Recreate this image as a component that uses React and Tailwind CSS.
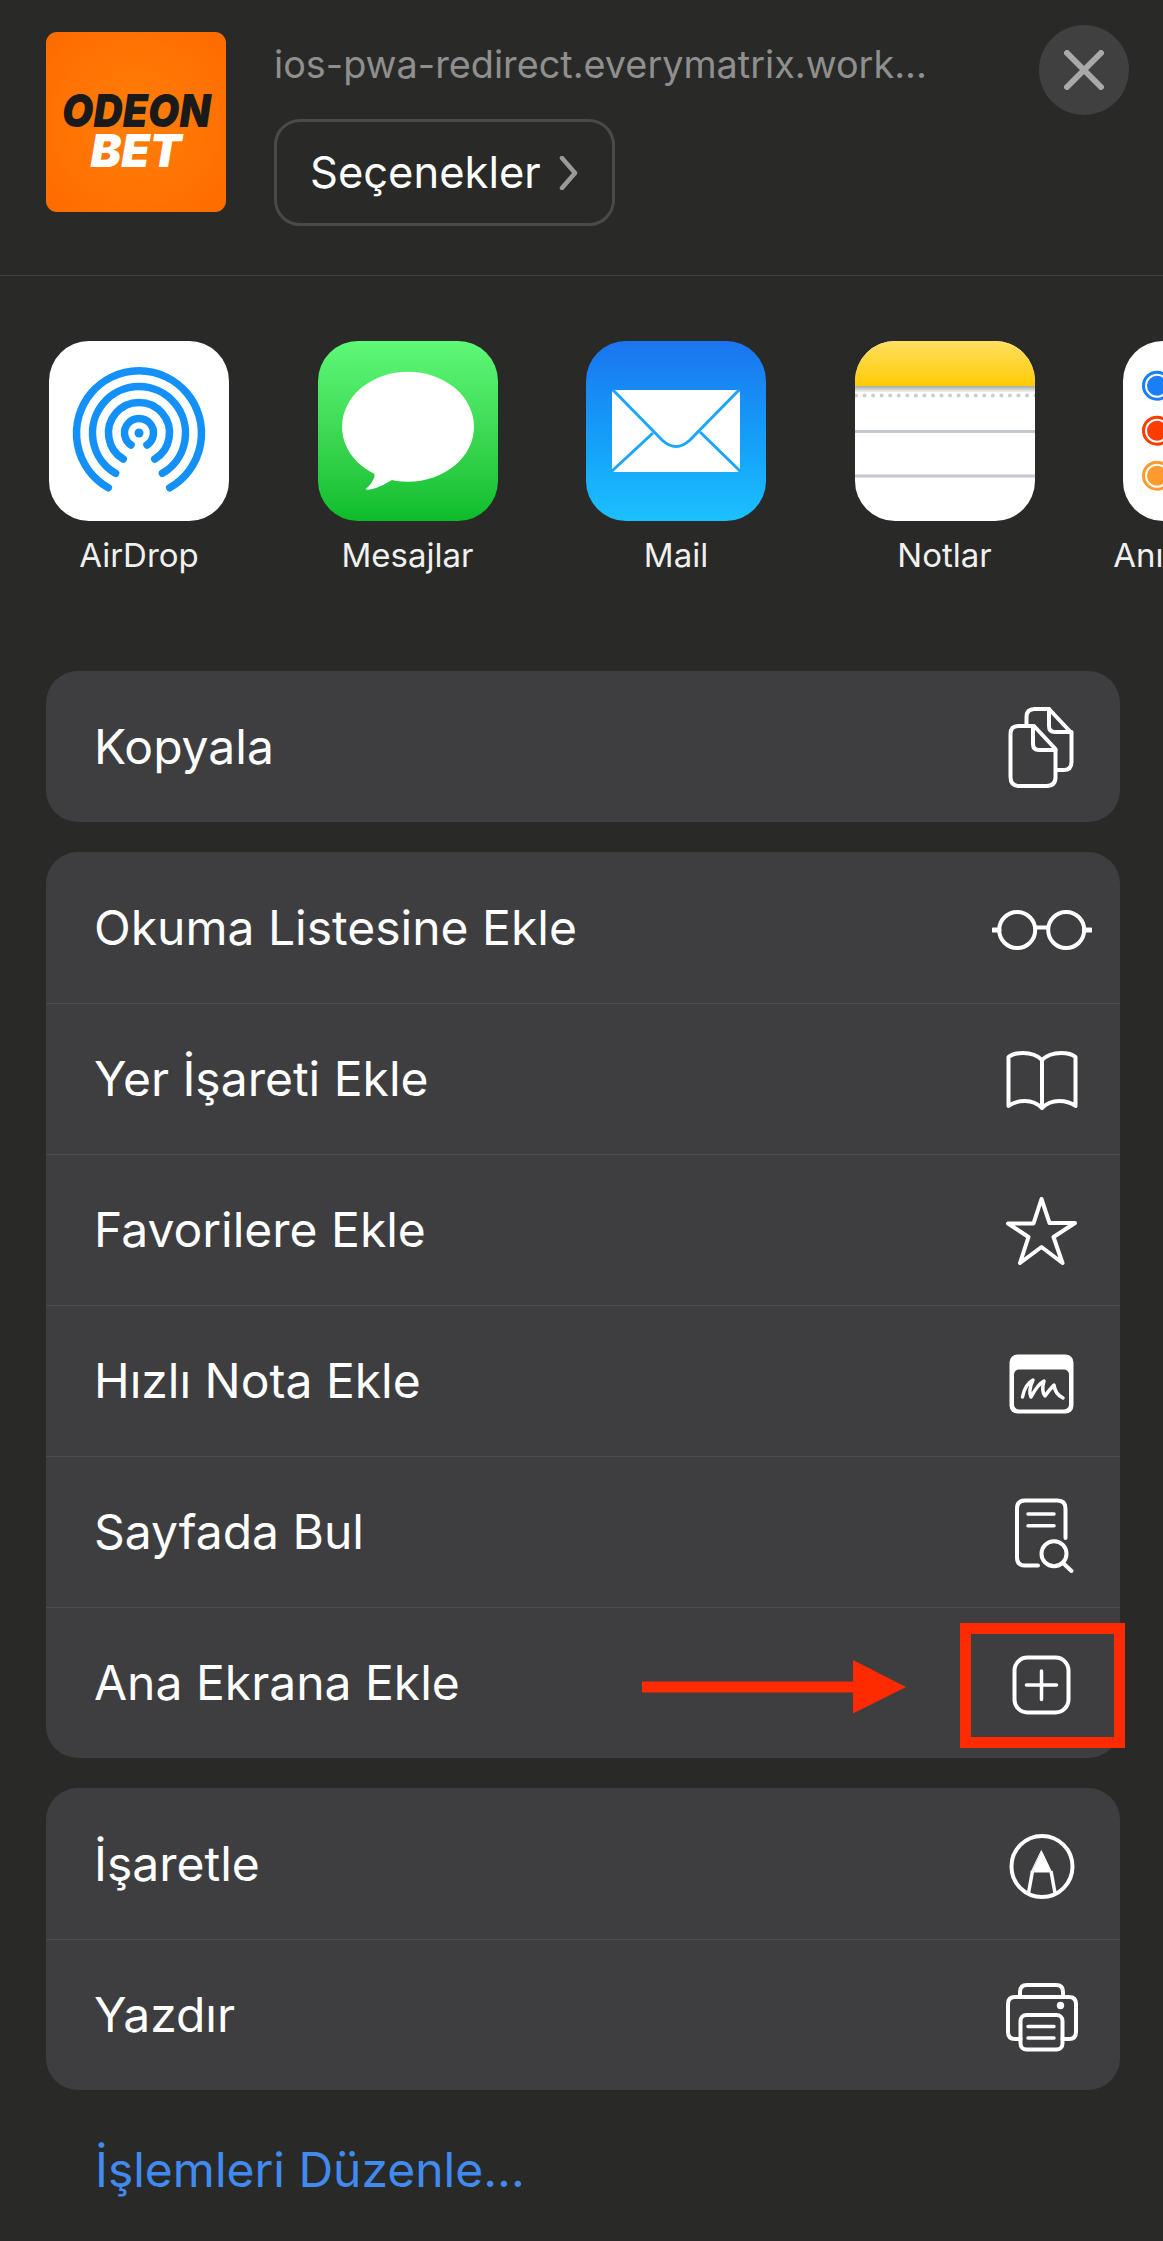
const font = { fontFamily: "Inter, 'Noto Sans', sans-serif" };

const stroke = {
  fill: "none",
  stroke: "#fff",
  strokeWidth: 4,
  strokeLinecap: "round",
  strokeLinejoin: "round",
};

const CopyIcon = () => (
  <g {...stroke}>
    <path d="M34.5 27V20q0-8 8-8H57L79.5 36V65q0 8-8 8H65.5" />
    <path d="M57 12V29q0 6 6 6H79.5" />
    <path d="M26.5 29H42L63.5 52V80q0 9-9 9H27.5q-9 0-9-9V37q0-8 8-8Z" />
    <path d="M41 29V47q0 6 6 6H63.5" />
  </g>
);

const GlassesIcon = () => (
  <g {...stroke}>
    <circle cx="25.2" cy="52" r="18" />
    <circle cx="74.2" cy="52" r="18" />
    <path d="M43.5 49.5H56" strokeLinecap="butt" />
    <path d="M1.5 52H7M92.5 52H98.5" strokeWidth="5" />
  </g>
);

const BookIcon = () => (
  <g {...stroke}>
    <path d="M50 31C45 26 38 24 31 24C25 24 20 25 16.5 28V77C22 73 27 72 33 72C39 72 45 74 50 79C55 74 61 72 67 72C73 72 78 73 83.5 77V28C80 25 75 24 69 24C62 24 55 26 50 31Z" />
    <path d="M50 31V78" />
  </g>
);

const StarIcon = () => (
  <g {...stroke}>
    <path d="M49.5 19L57.5 43H83L61.5 57L70.5 83L49.5 67L28 83L36.5 57L16 43.5H41.5Z" />
  </g>
);

const NoteIcon = () => (
  <g>
    <rect x="17.5" y="23.5" width="64" height="59" rx="8" fill="#fff" />
    <rect x="22" y="38.5" width="55" height="40" rx="5" fill="#3e3e40" />
    <path
      d="M30.5 66Q33 53 41 49Q36 60 39 66Q46 53 52 50Q49 60 53 65Q58 58 62 54Q63 63 71 67"
      fill="none"
      stroke="#fff"
      strokeWidth="3.5"
      strokeLinecap="round"
      strokeLinejoin="round"
    />
  </g>
);

const FindIcon = () => (
  <g {...stroke}>
    <path d="M46 83.5H33q-8 0-8-8V26.5q0-8 8-8H65.5q8 0 8 8V56" />
    <path d="M36 32H62M36 43.7H62" strokeWidth="3.5" />
    <circle cx="62" cy="71.7" r="12.5" />
    <path d="M71 81L79.5 89" />
  </g>
);

const PlusIcon = () => (
  <g {...stroke}>
    <rect x="22.5" y="24.5" width="54" height="55" rx="13" />
    <path d="M34.5 52H64.5M49.5 38V66.5" strokeWidth="3.5" />
  </g>
);

const MarkupIcon = () => (
  <g {...stroke}>
    <circle cx="50" cy="52.5" r="30.5" />
    <path d="M49.5 37L59.5 58H39.5Z" fill="#fff" strokeWidth="1" />
    <path d="M40.5 57L36.5 79M59 57L63 79" strokeLinecap="butt" strokeWidth="3.5" />
  </g>
);

const PrinterIcon = () => (
  <g {...stroke}>
    <path d="M28.5 74H23q-7 0-7-7V39q0-7 7-7H77q7 0 7 7V67q0 7-7 7H70.5" />
    <path d="M28 32V27q0-7 7-7H64q7 0 7 7V32" />
    <rect x="28.5" y="50" width="42" height="34.5" rx="6" />
    <path d="M36 61.5H62M36 73H62" strokeWidth="3.5" />
    <circle cx="68.5" cy="40.5" r="3.7" fill="#fff" stroke="none" />
  </g>
);

const Row = ({ label, icon, divider }) => (
  <div className={`flex h-[151px] items-center justify-between pl-[48px] pr-[28px] ${divider ? "border-t border-[#4c4c4e]" : ""}`}>
    <span className="text-[48px] leading-none text-white whitespace-nowrap">{label}</span>
    <svg width="100" height="100" viewBox="0 0 100 100" className="shrink-0">
      {icon}
    </svg>
  </div>
);

const Card = ({ rows }) => (
  <div className="overflow-hidden rounded-[32px] bg-[#3e3e40]">
    {rows.map((row, i) => (
      <Row key={row.label} label={row.label} icon={row.icon} divider={i > 0} />
    ))}
  </div>
);

const AirDropIcon = () => (
  <div className="h-[180px] w-[180px] overflow-hidden rounded-[40px] bg-white">
    <svg width="180" height="180" viewBox="0 0 180 180">
      <g fill="none" stroke="#1490f9" strokeWidth="7.5" strokeLinecap="round">
        <path d="M59.3 146.7A62.5 62.5 0 1 1 120.7 146.7" />
        <path d="M66.6 132.3A46.5 46.5 0 1 1 113.4 132.3" />
        <path d="M74.2 118A30.5 30.5 0 1 1 105.8 118" />
        <path d="M82 104A14.5 14.5 0 1 1 98 104" />
      </g>
      <circle cx="90" cy="92" r="4.5" fill="#1490f9" />
    </svg>
  </div>
);

const MessagesIcon = () => (
  <div className="h-[180px] w-[180px] overflow-hidden rounded-[40px] bg-gradient-to-b from-[#5df977] to-[#0abc2a]">
    <svg width="180" height="180" viewBox="0 0 180 180">
      <ellipse cx="90" cy="85.7" rx="66" ry="55" fill="#fff" />
      <path d="M53 128Q59 134 55 139Q52 145 47.5 148Q49 150 58 147Q66 144 74 139Z" fill="#fff" />
    </svg>
  </div>
);

const MailIcon = () => (
  <div className="h-[180px] w-[180px] overflow-hidden rounded-[40px] bg-gradient-to-b from-[#1c74f0] to-[#1bc1ff]">
    <svg width="180" height="180" viewBox="0 0 180 180">
      <rect x="26" y="49" width="128" height="82" rx="3" fill="#fff" />
      <g fill="none" stroke="#1ba6fb" strokeWidth="3">
        <path d="M27 49L76 99Q90 112 104 99L153 49" />
        <path d="M26 130L67 92M154 130L114 91" />
      </g>
    </svg>
  </div>
);

const NotesIcon = () => (
  <div className="h-[180px] w-[180px] overflow-hidden rounded-[40px] bg-white">
    <svg width="180" height="180" viewBox="0 0 180 180">
      <defs>
        <linearGradient id="notes" x1="0" y1="0" x2="0" y2="1">
          <stop offset="0" stopColor="#ffdf60" />
          <stop offset="1" stopColor="#ffcb05" />
        </linearGradient>
        <linearGradient id="shade" x1="0" y1="0" x2="0" y2="1">
          <stop offset="0" stopColor="#a9a9a9" />
          <stop offset="1" stopColor="#f2f2f2" />
        </linearGradient>
      </defs>
      <rect width="180" height="45" fill="url(#notes)" />
      <rect y="45" width="180" height="6" fill="url(#shade)" />
      {Array.from({ length: 22 }, (_, i) => (
        <circle key={i} cx={1 + i * 8.55} cy="54.5" r="2" fill="#c9ced4" />
      ))}
      <rect y="89" width="180" height="3" fill="#c3c8cf" />
      <rect y="133.5" width="180" height="3" fill="#c3c8cf" />
    </svg>
  </div>
);

const RemindersIcon = () => (
  <div className="h-[180px] w-[180px] overflow-hidden rounded-[40px] bg-white">
    <svg width="180" height="180" viewBox="0 0 180 180">
      {[
        [44.7, "#1a7ff5"],
        [89.7, "#fe3b00"],
        [134.7, "#fe9a2e"],
      ].map(([y, c]) => (
        <g key={y}>
          <circle cx="34" cy={y} r="13.5" fill="none" stroke={c} strokeWidth="3" />
          <circle cx="34" cy={y} r="10" fill={c} />
        </g>
      ))}
    </svg>
  </div>
);

const apps = [
  { label: "AirDrop", icon: <AirDropIcon /> },
  { label: "Mesajlar", icon: <MessagesIcon /> },
  { label: "Mail", icon: <MailIcon /> },
  { label: "Notlar", icon: <NotesIcon /> },
  { label: "Anımsatıcılar", icon: <RemindersIcon /> },
];

export default function App() {
  return (
    <div className="flex h-[2241px] w-[1163px] flex-col overflow-hidden bg-[#292a28]" style={font}>
      {/* Üst kısım */}
      <header className="flex h-[276px] shrink-0 items-start border-b border-[#414240] pl-[46px] pr-[34px] pt-[32px]">
        <div className="flex h-[180px] w-[180px] shrink-0 flex-col items-center justify-center rounded-[11px] bg-[radial-gradient(circle,#ff7f08_0%,#ff6a00_100%)] pt-[16px] italic">
          <span className="block h-[40px] scale-x-[0.88] text-[46px] font-black leading-[40px] text-[#1a1a1a]">ODEON</span>
          <span className="block h-[40px] text-[46px] font-black leading-[40px] text-white">BET</span>
        </div>
        <div className="ml-[48px] flex flex-1 flex-col items-start">
          <div className="mt-[11px] text-[37.8px] leading-[42px] text-[#8f8f8f] whitespace-nowrap">
            ios-pwa-redirect.everymatrix.work...
          </div>
          <button className="mt-[34px] flex h-[107px] w-[341px] items-center rounded-[26px] border-[3px] border-[#4a4b49] pl-[33px] text-[43.5px] text-white">
            Seçenekler
            <svg width="20" height="34" viewBox="0 0 20 34" className="ml-[18px]">
              <path d="M3 2L16 17L3 32" fill="none" stroke="#9a9a9a" strokeWidth="4.5" strokeLinecap="round" strokeLinejoin="round" />
            </svg>
          </button>
        </div>
        <button className="-mt-[7px] flex h-[90px] w-[90px] shrink-0 items-center justify-center rounded-full bg-[#3f403f]">
          <svg width="40" height="40" viewBox="0 0 40 40">
            <path d="M3 3L37 37M37 3L3 37" fill="none" stroke="#a9a9a9" strokeWidth="6" strokeLinecap="round" />
          </svg>
        </button>
      </header>

      {/* Uygulamalar */}
      <div className="flex shrink-0 gap-[88.5px] overflow-x-hidden pb-[12px] pl-[49px] pt-[65px]">
        {apps.map((app) => (
          <div key={app.label} className="flex w-[180px] shrink-0 flex-col items-center">
            {app.icon}
            <span className="mt-[14px] text-[33px] leading-[40px] text-[#f0f0f0] whitespace-nowrap">{app.label}</span>
          </div>
        ))}
      </div>

      {/* İşlemler */}
      <div className="relative mt-[84px] flex flex-col gap-[30px] pl-[46px] pr-[43px]">
        <Card rows={[{ label: "Kopyala", icon: <CopyIcon /> }]} />
        <Card
          rows={[
            { label: "Okuma Listesine Ekle", icon: <GlassesIcon /> },
            { label: "Yer İşareti Ekle", icon: <BookIcon /> },
            { label: "Favorilere Ekle", icon: <StarIcon /> },
            { label: "Hızlı Nota Ekle", icon: <NoteIcon /> },
            { label: "Sayfada Bul", icon: <FindIcon /> },
            { label: "Ana Ekrana Ekle", icon: <PlusIcon /> },
          ]}
        />
        <Card
          rows={[
            { label: "İşaretle", icon: <MarkupIcon /> },
            { label: "Yazdır", icon: <PrinterIcon /> },
          ]}
        />

        {/* Kırmızı işaretleme */}
        <div className="absolute left-[960px] top-[952px] h-[125px] w-[165px] border-[11px] border-[#fe2a00]" />
        <svg width="266" height="54" viewBox="0 0 266 54" className="absolute left-[640px] top-[989px]">
          <path d="M2 21.5H213V0L266 27L213 53.5V32.5H2Z" fill="#fe2a00" />
        </svg>
      </div>

      <div className="ml-[95px] mt-[56px] text-[48px] leading-none text-[#418bf0]">İşlemleri Düzenle...</div>
    </div>
  );
}
